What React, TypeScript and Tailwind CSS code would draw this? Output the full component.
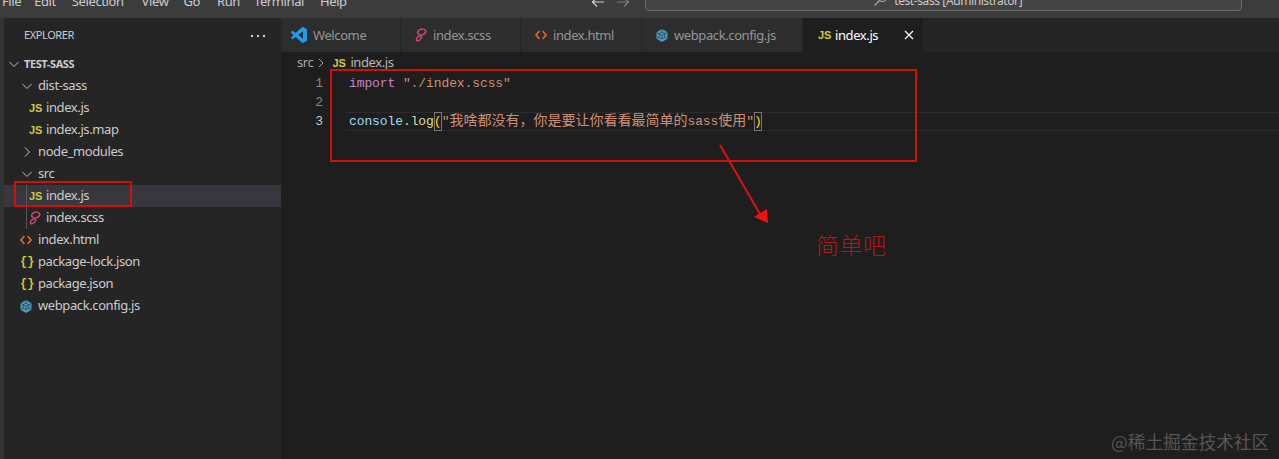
import React from "react";

const JsIcon = ({ w = "w-[12px]" }: { w?: string }) => (
  <span className={`${w} shrink-0 text-[11px] leading-none font-bold text-[#cbcb41] font-['Liberation_Sans',sans-serif] tracking-[0px]`}>JS</span>
);
const SassIcon = () => (
  <svg width="12" height="14" viewBox="0 0 12 14" fill="none" stroke="#c9487c" strokeWidth="1.5" strokeLinecap="round" className="shrink-0">
    <path d="M10.5 2.6C9.6 0.8 6 0.6 4 2.2 2.2 3.7 2 5.6 4 6.4 6 7.2 7.2 7.9 6.6 9.6 6 11.4 3.6 13.2 2.2 12.7 0.8 12.2 1.4 9.7 3.4 8.6 5 7.7 7 7.2 8.8 6.2 10.4 5.3 11 3.8 10.5 2.6Z" />
  </svg>
);
const HtmlIcon = () => (
  <svg width="12" height="10" viewBox="0 0 12 10" fill="none" stroke="#d9682e" strokeWidth="1.7" className="shrink-0">
    <path d="M4.4 1 1 5l3.4 4M7.6 1 11 5 7.6 9" />
  </svg>
);
const JsonIcon = () => (
  <span className="w-[12px] shrink-0 text-[12px] leading-none font-bold text-[#cbcb41] font-['Liberation_Mono',monospace] tracking-[0px] whitespace-nowrap">{"{}"}</span>
);
const WebpackIcon = () => (
  <svg width="12" height="13" viewBox="0 0 12 13" className="shrink-0">
    <path d="M6 0 11.5 3.2V9.8L6 13 .5 9.8V3.2Z" fill="#519aba" />
    <path d="M6 3.2 8.8 4.8V8.1L6 9.8 3.2 8.1V4.8ZM6 6.4V9.8M3.2 4.8 6 6.4 8.8 4.8M6 0V3.2M.5 3.2 3.2 4.8M11.5 3.2 8.8 4.8M.5 9.8 3.2 8.1M11.5 9.8 8.8 8.1" fill="none" stroke="#1e3f50" strokeWidth=".7" />
  </svg>
);
const VsIcon = () => (
  <svg width="16" height="16" viewBox="0 0 24 24" className="shrink-0">
    <path fill="#1f9cf0" d="M23.15 2.587L18.21.21a1.494 1.494 0 0 0-1.705.29l-9.46 8.63-4.12-3.128a.999.999 0 0 0-1.276.057L.327 7.261A1 1 0 0 0 .326 8.74L3.899 12 .326 15.26a1 1 0 0 0 .001 1.479L1.65 17.94a.999.999 0 0 0 1.276.057l4.12-3.128 9.46 8.63a1.492 1.492 0 0 0 1.704.29l4.942-2.377A1.5 1.5 0 0 0 24 20.06V3.939a1.5 1.5 0 0 0-.85-1.352zm-5.146 14.861L10.826 12l7.178-5.448v10.896z" />
  </svg>
);
const Chevron = ({ open }: { open: boolean }) => (
  <svg width="12" height="12" viewBox="0 0 12 12" fill="none" stroke="#c5c5c5" strokeWidth="1" className="shrink-0">
    <path d={open ? "M1.5 4 6 8.5 10.5 4" : "M4 1.5 8.5 6 4 10.5"} />
  </svg>
);

type Row = {
  label: string;
  pad: string;
  icon?: React.ReactNode;
  folder?: boolean;
  selected?: boolean;
  guide?: boolean;
};

const rows: Row[] = [
  { label: "dist-sass", pad: "pl-[17px] gap-[5px]", folder: true },
  { label: "index.js", pad: "pl-[25px] gap-[5px]", icon: <JsIcon /> },
  { label: "index.js.map", pad: "pl-[25px] gap-[5px]", icon: <JsIcon /> },
  { label: "node_modules", pad: "pl-[17px] gap-[5px]", folder: false },
  { label: "src", pad: "pl-[17px] gap-[5px]", folder: true },
  { label: "index.js", pad: "pl-[25px] gap-[5px]", icon: <JsIcon />, selected: true, guide: true },
  { label: "index.scss", pad: "pl-[25px] gap-[5px]", icon: <SassIcon />, guide: true },
  { label: "index.html", pad: "pl-[16px] gap-[6px]", icon: <HtmlIcon /> },
  { label: "package-lock.json", pad: "pl-[16px] gap-[6px]", icon: <JsonIcon /> },
  { label: "package.json", pad: "pl-[16px] gap-[6px]", icon: <JsonIcon /> },
  { label: "webpack.config.js", pad: "pl-[16px] gap-[6px]", icon: <WebpackIcon /> },
];

const tabs = [
  { label: "Welcome", icon: <VsIcon />, w: "w-[119px]", pad: "pl-[9px]", gap: "gap-[6px]" },
  { label: "index.scss", icon: <SassIcon />, w: "w-[120px]", pad: "pl-[14px]", gap: "gap-[6px]" },
  { label: "index.html", icon: <HtmlIcon />, w: "w-[121px]", pad: "pl-[14px]", gap: "gap-[6px]" },
  { label: "webpack.config.js", icon: <WebpackIcon />, w: "w-[161px]", pad: "pl-[14px]", gap: "gap-[6px]" },
];

const menus = [
  ["File", "ml-[2px]"],
  ["Edit", "ml-[13px]"],
  ["Selection", "ml-[16px]"],
  ["View", "ml-[18px]"],
  ["Go", "ml-[15px]"],
  ["Run", "ml-[17px]"],
  ["Terminal", "ml-[14px]"],
  ["Help", "ml-[16px]"],
];

const ui = "font-['Noto_Sans','Noto_Sans_CJK_SC',sans-serif] tracking-[-0.4px]";
const mono = "font-['Liberation_Mono','Noto_Sans_CJK_SC',monospace]";

export default function App() {
  return (
    <div className={`relative w-[1279px] h-[459px] overflow-hidden bg-[#1e1e1e] text-[13px] ${ui}`}>
      {/* title bar */}
      <div className="h-[18px] bg-[#3c3c3c] flex overflow-hidden text-[#cccccc] text-[13px] leading-[18px]">
        <div className="flex h-[18px] -mt-[8px]">
          {menus.map(([m, c]) => (
            <span key={m} className={c}>{m}</span>
          ))}
        </div>
        <div className="ml-[244px] flex items-center gap-[11px] h-[12px] -mt-[4px]">
          <svg width="14" height="12" viewBox="0 0 14 12" fill="none" stroke="#d0d0d0" strokeWidth="1.2"><path d="M13 6H2M6 1.5 1.5 6 6 10.5" /></svg>
          <svg width="14" height="12" viewBox="0 0 14 12" fill="none" stroke="#7d7d7d" strokeWidth="1.2"><path d="M1 6h11M8 1.5 12.500 6 8 10.500" /></svg>
        </div>
        <div className="ml-[15px] w-[597px] h-[12px] -mt-[1px] border border-[#6a6a6a] rounded-b-[4px] bg-[#444444] flex justify-center items-end">
          <div className="flex items-center gap-[6px] h-[18px] -mb-[1px] pl-[9px] text-[#cccccc] text-[12px] tracking-[-0.4px] whitespace-nowrap">
            <svg width="15" height="15" viewBox="0 0 15 15" fill="none" stroke="#b0b0b0" strokeWidth="1.1" className="-mt-[6px]"><circle cx="9.500" cy="5.500" r="4" /><path d="M6.500 8.500 1.500 13.500" /></svg>
            <span className="-mt-[3px]">test-sass [Administrator]</span>
          </div>
        </div>
      </div>

      <div className="flex h-[441px]">
        <div className="w-[4px] bg-[#333333]" />
        {/* sidebar */}
        <aside className="w-[277px] bg-[#252526] text-[#cccccc]">
          <div className="h-[35px] pl-[20px] pr-[15px] flex items-center justify-between text-[11px]">
            <span>EXPLORER</span>
            <svg width="16" height="4" viewBox="0 0 16 4" fill="#cccccc"><circle cx="2" cy="2" r="1.200" /><circle cx="8" cy="2" r="1.200" /><circle cx="14" cy="2" r="1.200" /></svg>
          </div>
          <div className="h-[22px] flex items-center pl-[4px] gap-[4px]">
            <Chevron open />
            <span className="text-[11px] font-bold">TEST-SASS</span>
          </div>
          {rows.map((r, i) => (
            <div key={i} className={`relative h-[22px] flex items-center ${r.pad} ${r.selected ? "bg-[#37373d]" : ""}`}>
              {r.guide && <div className="absolute left-[22px] top-0 bottom-0 w-px bg-[#585858]" />}
              {r.folder !== undefined && <Chevron open={r.folder} />}
              {r.icon}
              <span>{r.label}</span>
            </div>
          ))}
        </aside>

        {/* editor */}
        <main className="flex-1 flex flex-col min-w-0">
          <div className="h-[34px] bg-[#252526] flex">
            <div className="w-px bg-[#252526]" />
            {tabs.map((t) => (
              <div key={t.label} className={`${t.w} ${t.pad} ${t.gap} h-full bg-[#2d2d2d] border-r border-[#252526] flex items-center text-[#969696]`}>
                {t.icon}
                <span className="whitespace-nowrap pt-[1px]">{t.label}</span>
              </div>
            ))}
            <div className="w-[120px] h-full bg-[#1e1e1e] pl-[15px] flex items-center text-white gap-[5px]">
              <JsIcon />
              <span className="pt-[1px]">index.js</span>
              <svg width="10" height="10" viewBox="0 0 10 10" fill="none" stroke="#ffffff" strokeWidth="1.2" className="ml-[21px]"><path d="M1 1l8 8M9 1l-8 8" /></svg>
            </div>
          </div>
          <div className="h-[22px] pl-[16px] flex items-center gap-[4px] text-[#a9a9a9] text-[13px]">
            <span>src</span>
            <svg width="8" height="10" viewBox="0 0 8 10" fill="none" stroke="#a9a9a9" strokeWidth="1"><path d="M2 1l4 4-4 4" /></svg>
            <JsIcon w="w-[14px] ml-[3px]" />
            <span className="text-[#b8b8b8]">index.js</span>
          </div>
          <div className={`text-[13px] leading-[19px] tracking-normal ${mono}`}>
            <div className="h-[19px] flex">
              <span className="w-[42px] text-right text-[#858585]">1</span>
              <span className="ml-[26px] whitespace-pre tracking-[-0.1px]">
                <span className="text-[#c586c0]">import</span>
                <span className="text-[#ce9178]"> "./index.scss"</span>
              </span>
            </div>
            <div className="h-[19px] flex">
              <span className="w-[42px] text-right text-[#858585]">2</span>
            </div>
            <div className="h-[19px] flex">
              <span className="w-[42px] text-right text-[#c6c6c6]">3</span>
              <div className="ml-[22px] flex-1 border-y border-[#2b2b2b] pl-[4px] h-[19px] flex items-center whitespace-pre tracking-[-0.1px]">
                <span className="text-[#9cdcfe]">console</span>
                <span className="text-[#d4d4d4]">.</span>
                <span className="text-[#dcdcaa]">log</span>
                <span className="text-[#ffd700] outline outline-1 -outline-offset-1 outline-[#777777] w-[8px]">(</span>
                <span className="text-[#ce9178]">"</span>
                <span className="text-[#ce9178] text-[14px] tracking-normal">我啥都没有，你是要让你看看最简单的</span>
                <span className="text-[#ce9178]">sass</span>
                <span className="text-[#ce9178] text-[14px] tracking-normal">使用</span>
                <span className="text-[#ce9178]">"</span>
                <span className="text-[#ffd700] outline outline-1 -outline-offset-1 outline-[#777777] w-[8px]">)</span>
              </div>
            </div>
          </div>
        </main>
      </div>

      {/* annotations */}
      <div className="absolute left-[14px] top-[181px] w-[118px] h-[26px] border-2 border-[#d00f0f]" />
      <div className="absolute left-[330px] top-[69px] w-[587px] h-[93px] border-[2px] border-[#d00f0f]" />
      <svg className="absolute left-[715px] top-[142px]" width="60" height="85" viewBox="0 0 60 85" fill="none">
        <path d="M5 3 45 72" stroke="#e01010" strokeWidth="2" />
        <path d="M53 81 39 75 52 67Z" fill="#f01010" />
      </svg>
      <div className="absolute left-[816px] top-[228px] text-[23px] leading-[32px] tracking-[0.5px] font-light text-[#b81616] font-['Noto_Sans_CJK_SC',sans-serif]">简单吧</div>
      <div className="absolute left-[1111px] top-[429px] text-[17.700px] leading-[24px] tracking-normal text-[#565656] font-['Noto_Sans_CJK_SC',sans-serif]">@稀土掘金技术社区</div>
    </div>
  );
}
